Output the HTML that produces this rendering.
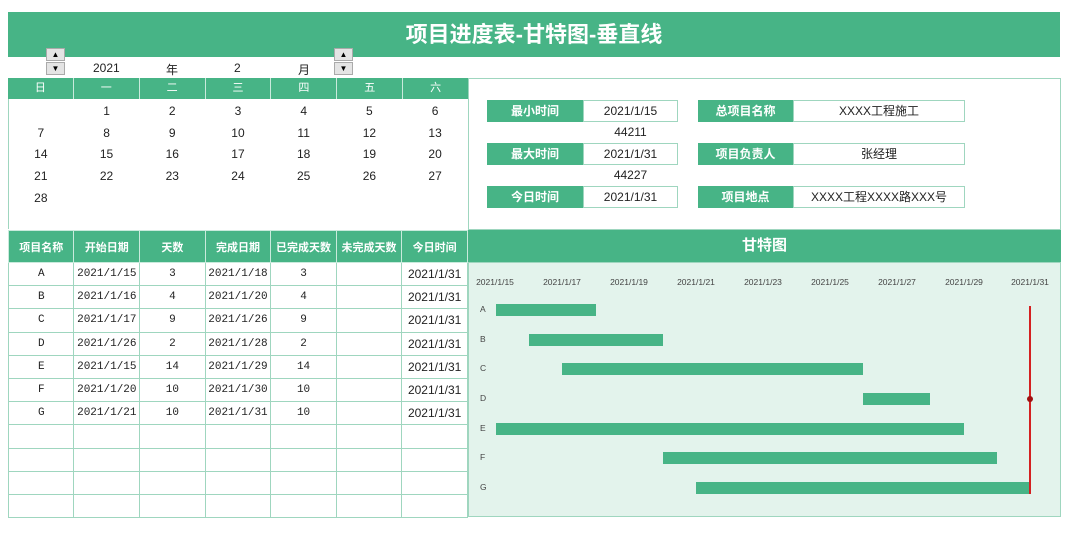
<!DOCTYPE html>
<html><head><meta charset="utf-8"><style>
*{margin:0;padding:0;box-sizing:border-box}
body{width:1080px;height:546px;background:#fff;position:relative;overflow:hidden;font-family:"Liberation Sans","Noto Sans CJK SC",sans-serif;color:#222}
.a{position:absolute}
.g{background:#47b486;color:#fff}
.c{text-align:center}
.title{left:8px;top:12px;width:1052px;height:45px;font-size:22px;font-weight:bold;line-height:45px}
.spin{width:19px;height:13px;background:#e4e4e4;border:1px solid #aaa;font-size:8px;line-height:11px;text-align:center;color:#000}
.cal td{width:65.7px;text-align:center;font-size:12px;height:21.7px}
.mono{font-family:"Liberation Mono","Noto Sans CJK SC",monospace;font-size:11px !important}
table{border-collapse:collapse}
.tb td{border:1px solid #9fd6bf;width:65.7px;height:23.2px;text-align:center;font-size:12px}
.tb tr.h td{background:#47b486;color:#fff;font-weight:bold;font-size:11px;height:32px;border-color:#c9eadc}
.lab{height:22px;line-height:22px;font-size:12px;font-weight:bold;text-align:center;background:#47b486;color:#fff}
.val{height:22px;line-height:20px;font-size:12px;text-align:center;border:1px solid #9fd6bf;background:#fff}
.ax{font-size:8.5px;color:#444;top:277px;width:70px;text-align:center}
.bar{background:#47b486;height:12px}
.rl{font-size:8.5px;color:#444;left:480px}
</style></head><body>
<div class="a g title c">项目进度表-甘特图-垂直线</div>
<div class="a spin" style="left:46px;top:48px">▲</div>
<div class="a spin" style="left:46px;top:62px">▼</div>
<div class="a spin" style="left:334px;top:48px">▲</div>
<div class="a spin" style="left:334px;top:62px">▼</div>
<div class="a" style="left:93px;top:61px;font-size:12px">2021</div>
<div class="a" style="left:166px;top:61px;font-size:12px">年</div>
<div class="a" style="left:234px;top:61px;font-size:12px">2</div>
<div class="a" style="left:298px;top:61px;font-size:12px">月</div>
<div class="a" style="left:8px;top:78px;width:460px;height:151px;border-left:1px solid #9fd6bf"></div>
<div class="a" style="left:8px;top:78px;width:460px;height:21px;display:flex">
<div class="g c" style="flex:1;font-size:11px;line-height:21px;border-right:1px solid #c9eadc">日</div><div class="g c" style="flex:1;font-size:11px;line-height:21px;border-right:1px solid #c9eadc">一</div><div class="g c" style="flex:1;font-size:11px;line-height:21px;border-right:1px solid #c9eadc">二</div><div class="g c" style="flex:1;font-size:11px;line-height:21px;border-right:1px solid #c9eadc">三</div><div class="g c" style="flex:1;font-size:11px;line-height:21px;border-right:1px solid #c9eadc">四</div><div class="g c" style="flex:1;font-size:11px;line-height:21px;border-right:1px solid #c9eadc">五</div><div class="g c" style="flex:1;font-size:11px;line-height:21px">六</div></div>
<table class="a cal" style="left:8px;top:100px;width:460px">
<tr><td></td><td>1</td><td>2</td><td>3</td><td>4</td><td>5</td><td>6</td></tr>
<tr><td>7</td><td>8</td><td>9</td><td>10</td><td>11</td><td>12</td><td>13</td></tr>
<tr><td>14</td><td>15</td><td>16</td><td>17</td><td>18</td><td>19</td><td>20</td></tr>
<tr><td>21</td><td>22</td><td>23</td><td>24</td><td>25</td><td>26</td><td>27</td></tr>
<tr><td>28</td><td></td><td></td><td></td><td></td><td></td><td></td></tr>
</table>
<div class="a" style="left:468px;top:78px;width:593px;height:152px;border:1px solid #9fd6bf"></div>
<div class="a lab" style="left:487px;top:100px;width:96px">最小时间</div>
<div class="a val" style="left:583px;top:100px;width:95px">2021/1/15</div>
<div class="a c" style="left:583px;top:125px;width:95px;font-size:12px">44211</div>
<div class="a lab" style="left:487px;top:143px;width:96px">最大时间</div>
<div class="a val" style="left:583px;top:143px;width:95px">2021/1/31</div>
<div class="a c" style="left:583px;top:168px;width:95px;font-size:12px">44227</div>
<div class="a lab" style="left:487px;top:186px;width:96px">今日时间</div>
<div class="a val" style="left:583px;top:186px;width:95px">2021/1/31</div>
<div class="a lab" style="left:698px;top:100px;width:95px">总项目名称</div>
<div class="a val" style="left:793px;top:100px;width:172px">XXXX工程施工</div>
<div class="a lab" style="left:698px;top:143px;width:95px">项目负责人</div>
<div class="a val" style="left:793px;top:143px;width:172px">张经理</div>
<div class="a lab" style="left:698px;top:186px;width:95px">项目地点</div>
<div class="a val" style="left:793px;top:186px;width:172px">XXXX工程XXXX路XXX号</div>
<table class="a tb" style="left:8px;top:230px;width:460px">
<tr class="h"><td>项目名称</td><td>开始日期</td><td>天数</td><td>完成日期</td><td>已完成天数</td><td>未完成天数</td><td>今日时间</td></tr>
<tr><td class="mono">A</td><td class="mono">2021/1/15</td><td class="mono">3</td><td class="mono">2021/1/18</td><td class="mono">3</td><td></td><td>2021/1/31</td></tr>
<tr><td class="mono">B</td><td class="mono">2021/1/16</td><td class="mono">4</td><td class="mono">2021/1/20</td><td class="mono">4</td><td></td><td>2021/1/31</td></tr>
<tr><td class="mono">C</td><td class="mono">2021/1/17</td><td class="mono">9</td><td class="mono">2021/1/26</td><td class="mono">9</td><td></td><td>2021/1/31</td></tr>
<tr><td class="mono">D</td><td class="mono">2021/1/26</td><td class="mono">2</td><td class="mono">2021/1/28</td><td class="mono">2</td><td></td><td>2021/1/31</td></tr>
<tr><td class="mono">E</td><td class="mono">2021/1/15</td><td class="mono">14</td><td class="mono">2021/1/29</td><td class="mono">14</td><td></td><td>2021/1/31</td></tr>
<tr><td class="mono">F</td><td class="mono">2021/1/20</td><td class="mono">10</td><td class="mono">2021/1/30</td><td class="mono">10</td><td></td><td>2021/1/31</td></tr>
<tr><td class="mono">G</td><td class="mono">2021/1/21</td><td class="mono">10</td><td class="mono">2021/1/31</td><td class="mono">10</td><td></td><td>2021/1/31</td></tr>
<tr><td></td><td></td><td></td><td></td><td></td><td></td><td></td></tr>
<tr><td></td><td></td><td></td><td></td><td></td><td></td><td></td></tr>
<tr><td></td><td></td><td></td><td></td><td></td><td></td><td></td></tr>
<tr><td></td><td></td><td></td><td></td><td></td><td></td><td></td></tr>
</table>
<div class="a g c" style="left:468px;top:230px;width:593px;height:32px;line-height:32px;font-size:15px;font-weight:bold">甘特图</div>
<div class="a" style="left:468px;top:262px;width:593px;height:255px;background:#e3f3ec;border:1px solid #9fd6bf"></div>
<div class="a ax" style="left:460px">2021/1/15</div>
<div class="a ax" style="left:527px">2021/1/17</div>
<div class="a ax" style="left:594px">2021/1/19</div>
<div class="a ax" style="left:661px">2021/1/21</div>
<div class="a ax" style="left:728px">2021/1/23</div>
<div class="a ax" style="left:795px">2021/1/25</div>
<div class="a ax" style="left:862px">2021/1/27</div>
<div class="a ax" style="left:929px">2021/1/29</div>
<div class="a ax" style="left:995px">2021/1/31</div>
<div class="a rl" style="top:304px">A</div>
<div class="a rl" style="top:334px">B</div>
<div class="a rl" style="top:363px">C</div>
<div class="a rl" style="top:393px">D</div>
<div class="a rl" style="top:423px">E</div>
<div class="a rl" style="top:452px">F</div>
<div class="a rl" style="top:482px">G</div>
<div class="a bar" style="left:496px;top:304px;width:100px"></div>
<div class="a bar" style="left:529px;top:334px;width:134px"></div>
<div class="a bar" style="left:562px;top:363px;width:301px"></div>
<div class="a bar" style="left:863px;top:393px;width:67px"></div>
<div class="a bar" style="left:496px;top:423px;width:468px"></div>
<div class="a bar" style="left:663px;top:452px;width:334px"></div>
<div class="a bar" style="left:696px;top:482px;width:334px"></div>
<div class="a" style="left:1029px;top:306px;width:2px;height:188px;background:#d42020"></div>
<div class="a" style="left:1027px;top:396px;width:6px;height:6px;border-radius:50%;background:#a01010"></div>
</body></html>
